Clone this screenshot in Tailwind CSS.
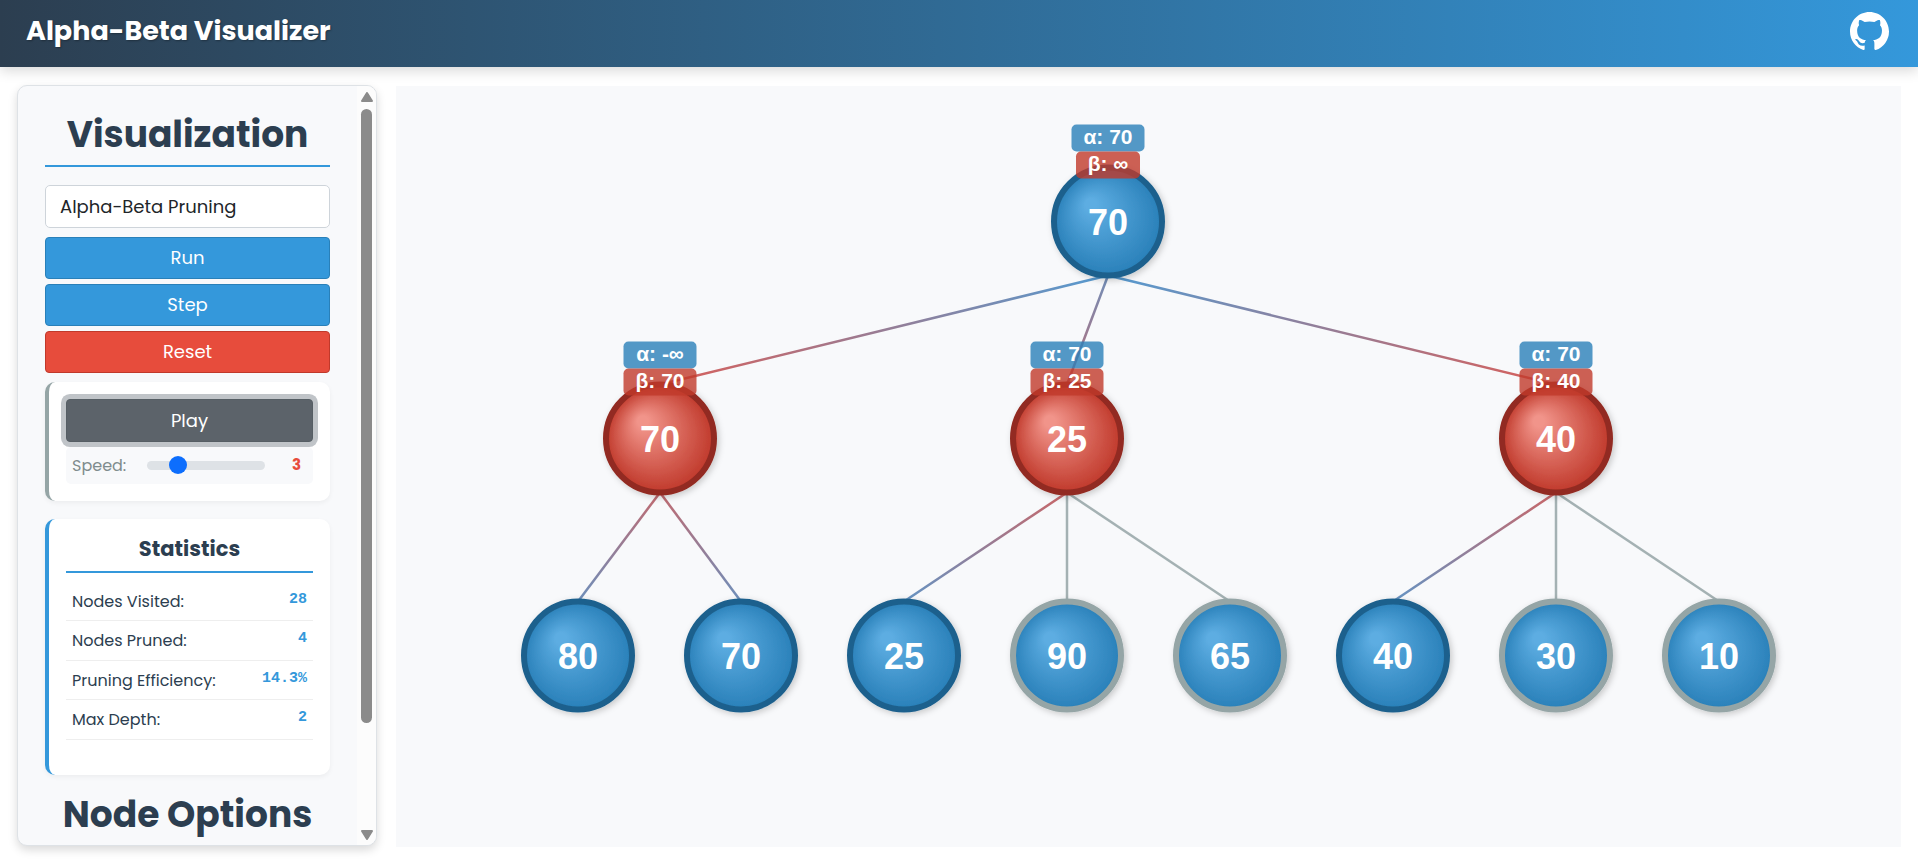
<!DOCTYPE html>
<html lang="en">
<head>
<meta charset="utf-8">
<meta name="viewport" content="width=device-width, initial-scale=1">
<title>Alpha-Beta Visualizer</title>
<script src="https://cdn.jsdelivr.net/npm/@tailwindcss/browser@4"></script>
</head>
<body class="flex h-screen flex-col overflow-hidden bg-white font-[Poppins,Inter,sans-serif] text-[#212529]">
<header class="relative z-10 flex h-[67px] shrink-0 items-center justify-between bg-linear-[90deg,#2c3e50,#3498db] pr-[29px] pl-[26px] shadow-[0_4px_12px_rgba(0,0,0,0.15)]">
  <span class="pb-[4px] text-[27px] font-bold text-white [text-shadow:1px_1px_2px_rgba(0,0,0,0.3)]">Alpha-Beta Visualizer</span>
  <a href="https://github.com" aria-label="GitHub" class="mb-[4px] block">
    <svg class="size-[39px]" viewBox="0 0 16 16" fill="#fff"><path d="M8 0C3.58 0 0 3.58 0 8c0 3.54 2.29 6.53 5.47 7.59.4.07.55-.17.55-.38 0-.19-.01-.82-.01-1.49-2.01.37-2.53-.49-2.69-.94-.09-.23-.48-.94-.82-1.13-.28-.15-.68-.52-.01-.53.63-.01 1.08.58 1.23.82.72 1.21 1.87.87 2.33.66.07-.52.28-.87.51-1.07-1.78-.2-3.64-.89-3.64-3.95 0-.87.31-1.59.82-2.15-.08-.2-.36-1.02.08-2.12 0 0 .67-.21 2.2.82.64-.18 1.32-.27 2-.27s1.36.09 2 .27c1.53-1.04 2.2-.82 2.2-.82.44 1.1.16 1.92.08 2.12.51.56.82 1.27.82 2.15 0 3.07-1.87 3.75-3.65 3.95.29.25.54.73.54 1.48 0 1.07-.01 1.93-.01 2.2 0 .21.15.46.55.38A8.01 8.01 0 0 0 16 8c0-4.42-3.58-8-8-8z"/></svg>
  </a>
</header>

<main class="flex min-h-0 flex-1 gap-[19px] pt-[18px] pr-[17px] pb-[14px] pl-[17px]">
  <aside class="flex w-[360px] shrink-0 overflow-hidden rounded-[10px] border border-[#dee2e6] bg-[#f8f9fb] shadow-[0_4px_10px_rgba(0,0,0,0.15)]">
    <div class="min-w-0 flex-1 overflow-y-auto px-[27px] pt-[24px] [scrollbar-width:none]">
      <h2 class="border-b-2 border-[#3498db] pb-[6px] text-center text-[36px] leading-[49px] font-bold text-[#2c3e50]">Visualization</h2>
      <select aria-label="Algorithm" class="mt-[18px] block h-[43px] w-full appearance-none rounded-[5px] border border-[#ced4da] bg-white px-[14px] text-[18px] text-[#212529]">
        <option>Alpha-Beta Pruning</option>
      </select>
      <div class="mt-[9px] flex flex-col gap-[5px] text-[18px] text-white">
        <button class="h-[42px] rounded-[4px] border border-[#2980b9] bg-[#3498db] pb-[1px]">Run</button>
        <button class="h-[42px] rounded-[4px] border border-[#2980b9] bg-[#3498db] pb-[1px]">Step</button>
        <button class="h-[42px] rounded-[4px] border border-[#c0392b] bg-[#e74c3c] pb-[1px]">Reset</button>
      </div>
      <section class="mt-[9px] rounded-[10px] border-l-4 border-[#95a5a6] bg-white px-[17px] pt-[17px] pb-[17px] shadow-[0_2px_5px_rgba(0,0,0,0.05)]">
        <button class="block h-[43px] w-full rounded-[4px] border border-[#565e64] bg-[#5c636a] text-[18px] text-white shadow-[0_0_0_5px_rgba(130,138,145,0.5)]">Play</button>
        <div class="mt-[5px] flex h-[37px] items-center rounded-[5px] bg-[#f8f9fb] px-[6px]">
          <label for="speed" class="w-[75px] text-[16px] text-[#7f8c8d]">Speed:</label>
          <input id="speed" type="range" min="1" max="10" value="3" class="h-[18px] w-[118px] appearance-none bg-transparent [&::-webkit-slider-runnable-track]:h-[9px] [&::-webkit-slider-runnable-track]:rounded-full [&::-webkit-slider-runnable-track]:bg-[#dee2e6] [&::-webkit-slider-thumb]:mt-[-5px] [&::-webkit-slider-thumb]:size-[18px] [&::-webkit-slider-thumb]:appearance-none [&::-webkit-slider-thumb]:rounded-full [&::-webkit-slider-thumb]:bg-[#0d6efd]">
          <output for="speed" class="flex-1 pr-[6px] text-right text-[15px] font-bold text-[#e74c3c]">3</output>
        </div>
      </section>
      <section class="mt-[18px] rounded-[10px] border-l-4 border-[#3498db] bg-white px-[17px] pt-[16px] pb-[35px] text-[#2c3e50] shadow-[0_2px_5px_rgba(0,0,0,0.05)]">
        <h3 class="border-b-2 border-[#3498db] pb-[8px] text-center text-[21px] leading-[28px] font-bold">Statistics</h3>
        <dl class="mt-[9px] text-[16px]">
          <div class="flex h-[39px] justify-between border-b border-[#eeeeee] px-[6px] pt-[8px]"><dt>Nodes Visited:</dt><dd class="font-['Liberation_Mono',monospace] text-[15px] leading-[19px] font-bold text-[#3498db]">28</dd></div>
          <div class="flex h-[40px] justify-between border-b border-[#eeeeee] px-[6px] pt-[8px]"><dt>Nodes Pruned:</dt><dd class="font-['Liberation_Mono',monospace] text-[15px] leading-[19px] font-bold text-[#3498db]">4</dd></div>
          <div class="flex h-[39px] justify-between border-b border-[#eeeeee] px-[6px] pt-[8px]"><dt>Pruning Efficiency:</dt><dd class="font-['Liberation_Mono',monospace] text-[15px] leading-[19px] font-bold text-[#3498db]">14.3%</dd></div>
          <div class="flex h-[40px] justify-between border-b border-[#eeeeee] px-[6px] pt-[8px]"><dt>Max Depth:</dt><dd class="font-['Liberation_Mono',monospace] text-[15px] leading-[19px] font-bold text-[#3498db]">2</dd></div>
        </dl>
      </section>
      <h2 class="mt-[15px] border-b-2 border-[#3498db] pb-[6px] text-center text-[36px] leading-[49px] font-bold text-[#2c3e50]">Node Options</h2>
    </div>
    <div class="flex w-[19px] shrink-0 flex-col items-center bg-[#fcfcfc] pt-[6px] pb-[5px]" aria-hidden="true">
      <svg class="h-[10px] w-[12px] shrink-0" viewBox="0 0 12 10"><path d="M6 1L11 9H1Z" fill="#8b8b8b" stroke="#8b8b8b" stroke-width="2" stroke-linejoin="round"/></svg>
      <div class="flex w-full flex-1 flex-col items-center pt-[7px] pb-[7px]">
        <div class="h-[86%] w-[11px] rounded-full bg-[#8b8b8b]"></div>
      </div>
      <svg class="h-[10px] w-[12px] shrink-0" viewBox="0 0 12 10"><path d="M6 9L11 1H1Z" fill="#8b8b8b" stroke="#8b8b8b" stroke-width="2" stroke-linejoin="round"/></svg>
    </div>
  </aside>

  <section class="mt-[1px] -mb-[1px] min-w-0 flex-1 bg-[#f8f9fb]" aria-label="Game tree">
    <svg id="tree" class="block h-full w-full" viewBox="0 0 1505 760" font-family="'Liberation Sans', Arial, sans-serif" font-weight="bold" fill="#fff" text-anchor="middle">
      <defs>
        <radialGradient id="max" cx="50%" cy="50%" r="50%" fx="34%" fy="34%" fr="5%"><stop offset="0" stop-color="#5dade2"/><stop offset="1" stop-color="#2980b9"/></radialGradient>
        <radialGradient id="min" cx="50%" cy="50%" r="50%" fx="34%" fy="34%" fr="5%"><stop offset="0" stop-color="#f1948a"/><stop offset="1" stop-color="#c0392b"/></radialGradient>
        <filter id="shadow" x="-20%" y="-20%" width="150%" height="150%"><feDropShadow dx="2" dy="2" stdDeviation="3" flood-color="#000" flood-opacity="0.2"/></filter>
      </defs>
    </svg>
  </section>
</main>

<script>
  const nodes = {
    root: { x: 712, y: 135, v: 70, max: true, a: '70', b: '∞' },
    l: { x: 264, y: 352, v: 70, parent: 'root', a: '-∞', b: '70' },
    m: { x: 671, y: 352, v: 25, parent: 'root', a: '70', b: '25' },
    r: { x: 1160, y: 352, v: 40, parent: 'root', a: '70', b: '40' },
    l1: { x: 182, y: 569, v: 80, max: true, parent: 'l' },
    l2: { x: 345, y: 569, v: 70, max: true, parent: 'l' },
    m1: { x: 508, y: 569, v: 25, max: true, parent: 'm' },
    m2: { x: 671, y: 569, v: 90, max: true, parent: 'm', pruned: true },
    m3: { x: 834, y: 569, v: 65, max: true, parent: 'm', pruned: true },
    r1: { x: 997, y: 569, v: 40, max: true, parent: 'r' },
    r2: { x: 1160, y: 569, v: 30, max: true, parent: 'r', pruned: true },
    r3: { x: 1323, y: 569, v: 10, max: true, parent: 'r', pruned: true }
  };
  const R = 54;
  const svg = document.getElementById('tree');
  const add = (tag, attrs, text, to = svg) => {
    const el = document.createElementNS('http://www.w3.org/2000/svg', tag);
    for (const k in attrs) el.setAttribute(k, attrs[k]);
    if (text !== undefined) el.textContent = text;
    to.appendChild(el);
    return el;
  };
  const defs = svg.querySelector('defs');

  // Edges fade from the parent's colour to the child's, centre to centre.
  for (const id in nodes) {
    const n = nodes[id], p = nodes[n.parent];
    if (!p) continue;
    let stroke = '#95a5a6';
    if (!n.pruned) {
      const g = add('linearGradient', { id: 'edge-' + id, gradientUnits: 'userSpaceOnUse', x1: p.x, y1: p.y, x2: n.x, y2: n.y }, undefined, defs);
      add('stop', { offset: 0, 'stop-color': p.max ? '#2f8ed2' : '#dd4035' }, undefined, g);
      add('stop', { offset: 1, 'stop-color': n.max ? '#2f8ed2' : '#dd4035' }, undefined, g);
      stroke = 'url(#edge-' + id + ')';
    }
    add('line', { x1: p.x, y1: p.y + R, x2: n.x, y2: n.y - R, stroke, 'stroke-width': 2.5, 'stroke-opacity': 0.85 });
  }

  const tag = (n, top, label, value, fill) => {
    const w = value === '∞' ? 64 : 73;
    add('rect', { x: n.x - w / 2, y: top, width: w, height: 27, rx: 5, fill, 'fill-opacity': 0.8 });
    add('text', { x: n.x, y: top + 19, 'font-size': 21 }, label + ': ' + value);
  };
  for (const id in nodes) {
    const n = nodes[id];
    add('circle', {
      cx: n.x, cy: n.y, r: R, fill: n.max ? 'url(#max)' : 'url(#min)',
      stroke: n.pruned ? '#95a5a6' : n.max ? '#1f618d' : '#922b21', 'stroke-width': 6, filter: 'url(#shadow)'
    });
    add('text', { x: n.x, y: n.y + 13, 'font-size': 36 }, n.v);
    if (n.a) {
      tag(n, n.y - 97, 'α', n.a, '#2980b9');
      tag(n, n.y - 70, 'β', n.b, '#c0392b');
    }
  }
</script>
</body>
</html>
